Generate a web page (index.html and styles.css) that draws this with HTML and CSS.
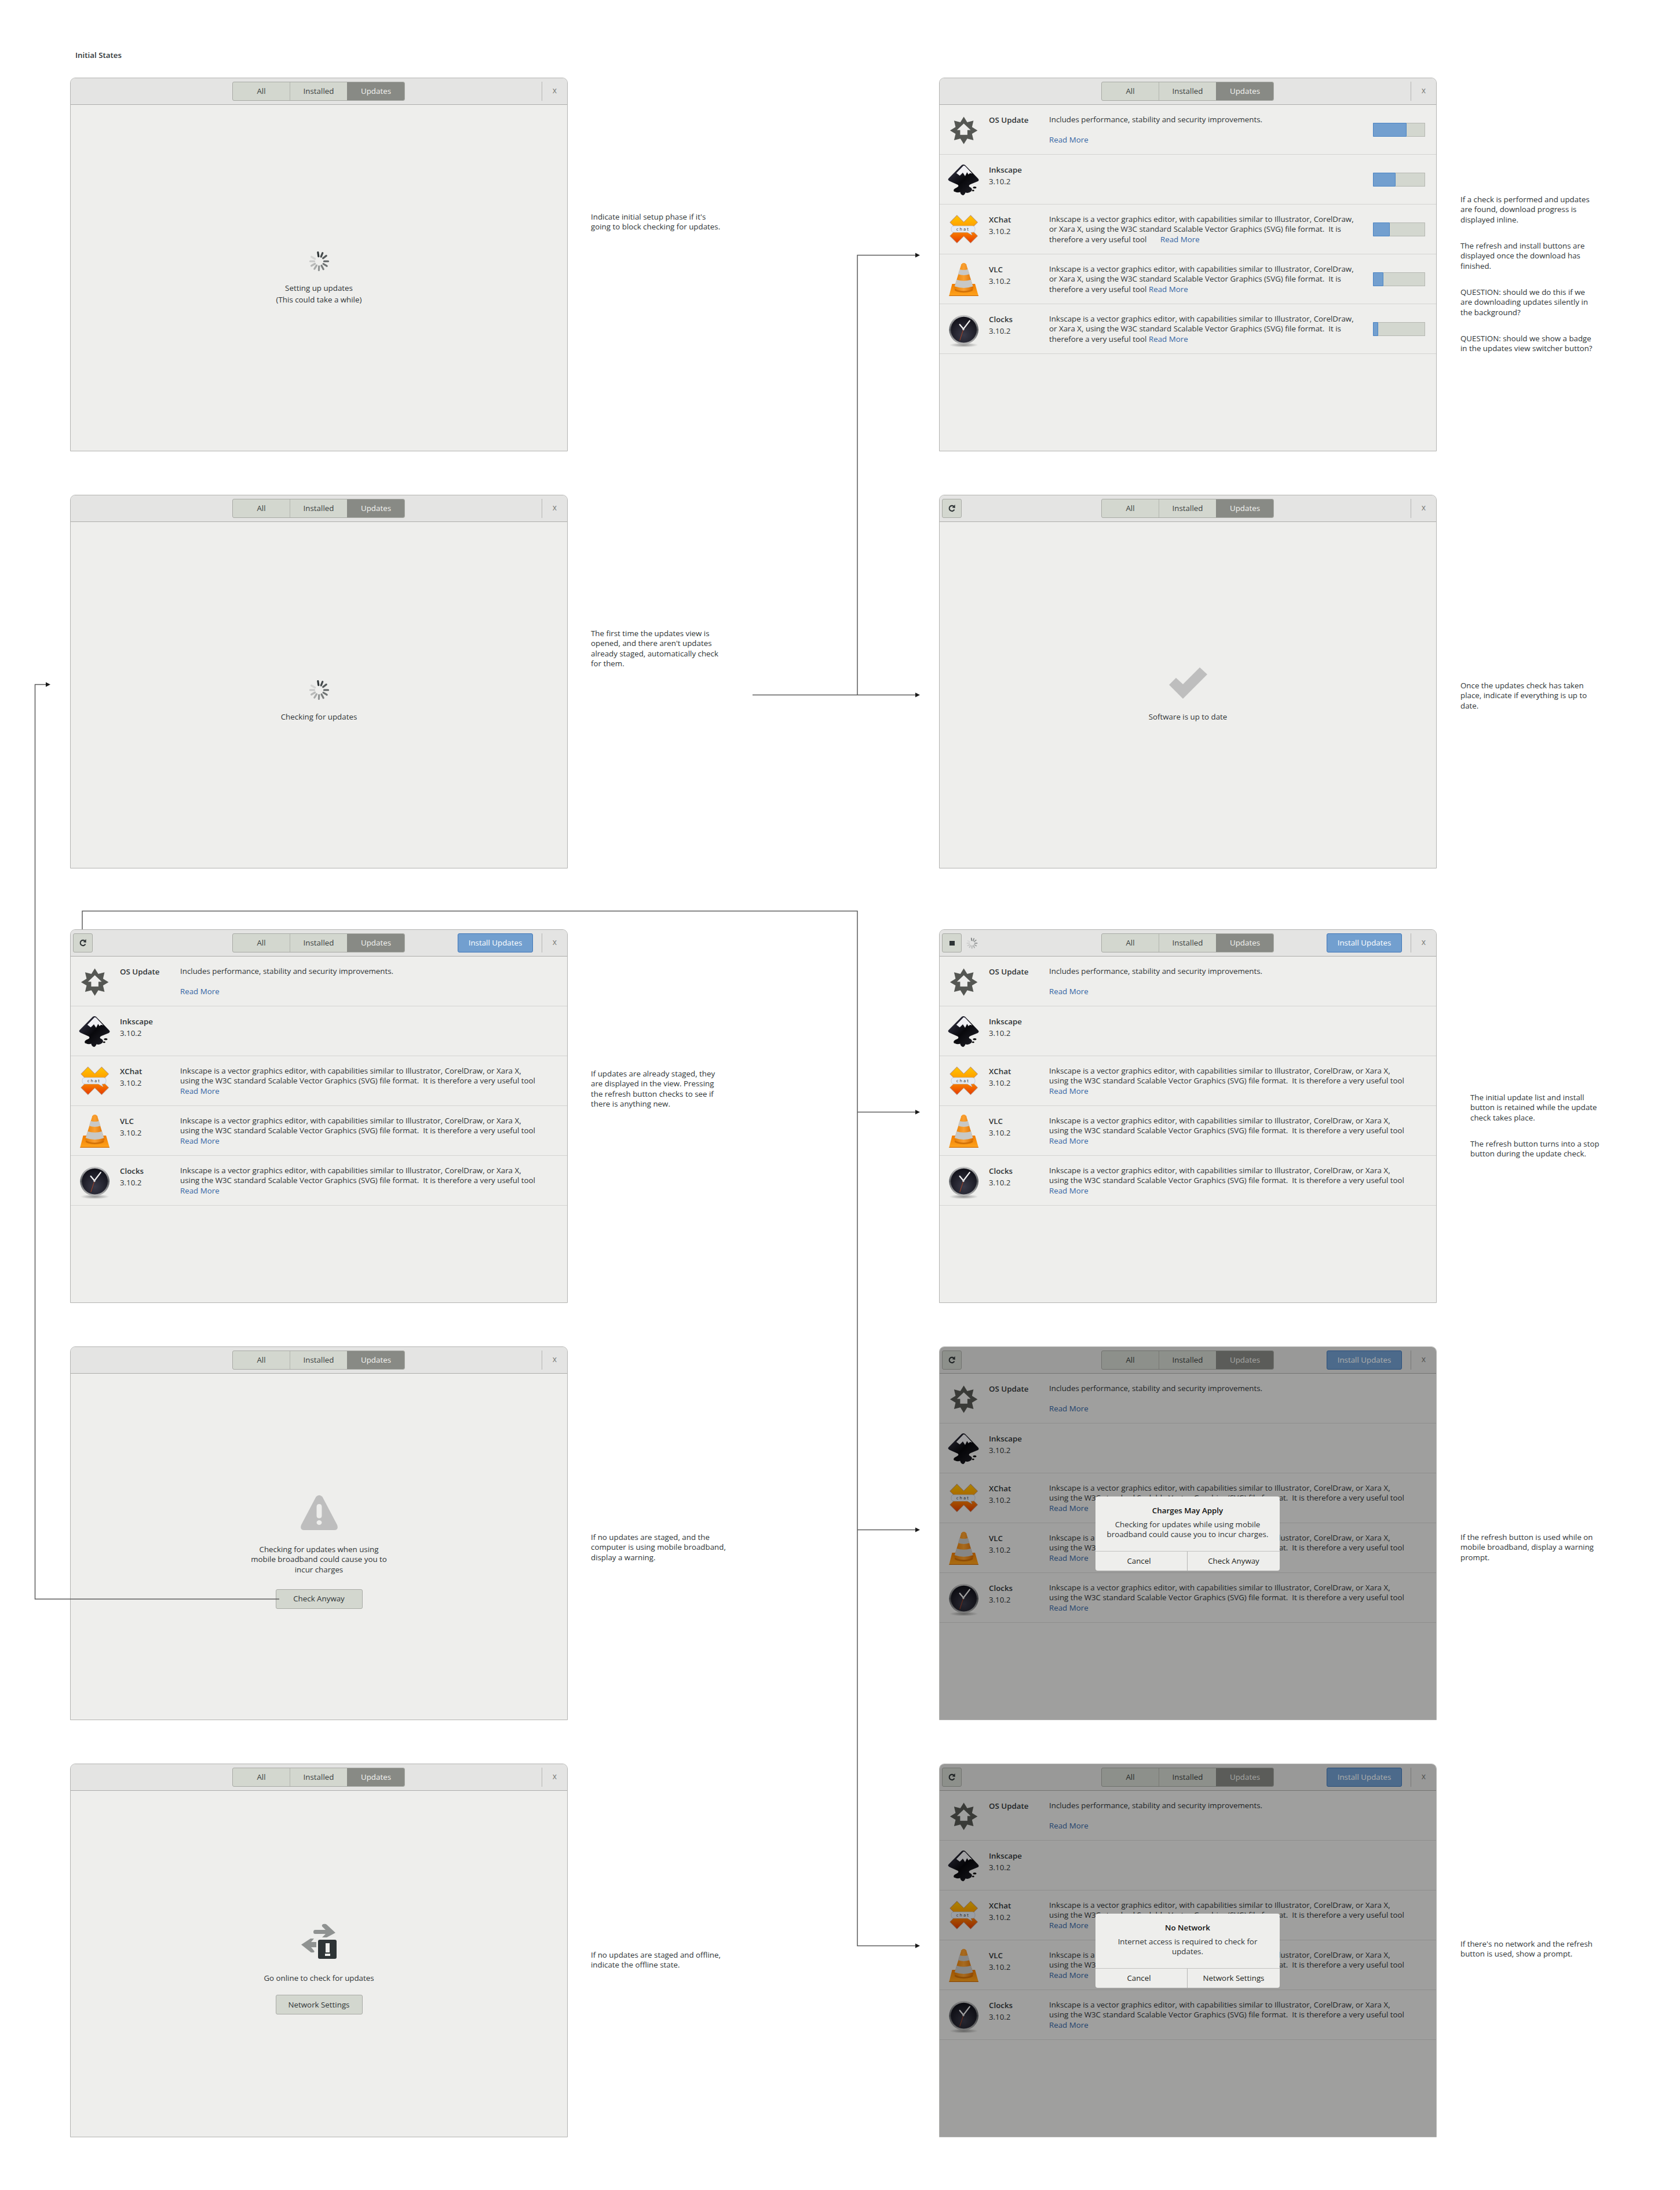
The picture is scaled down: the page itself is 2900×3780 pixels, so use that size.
FILE: index.html
```html
<!DOCTYPE html>
<html lang="en">
<head>
<meta charset="utf-8">
<title>Updates initial states</title>
<link rel="stylesheet" href="styles.css">
</head>
<body>
<svg class="sprite" xmlns="http://www.w3.org/2000/svg">
  <defs>
    <linearGradient id="g-x" gradientUnits="userSpaceOnUse" x1="0" y1="58" x2="0" y2="200"><stop offset="0" stop-color="#ffc400"/><stop offset=".45" stop-color="#ff9a00"/><stop offset="1" stop-color="#e63c00"/></linearGradient>
    <linearGradient id="g-cone" x1="0" y1="0" x2="1" y2="0"><stop offset="0" stop-color="#e87d00"/><stop offset=".5" stop-color="#f9a032"/><stop offset="1" stop-color="#d96c00"/></linearGradient>
    <linearGradient id="g-base" x1="0" y1="0" x2="0" y2="1"><stop offset="0" stop-color="#f07c00"/><stop offset="1" stop-color="#ffa51e"/></linearGradient>
    <linearGradient id="g-rim" x1="0" y1="0" x2="0" y2="1"><stop offset="0" stop-color="#c9c9c9"/><stop offset=".5" stop-color="#55585c"/><stop offset="1" stop-color="#b9b9b9"/></linearGradient>
    <radialGradient id="g-face" cx=".5" cy=".7" r=".7"><stop offset="0" stop-color="#3a3a48"/><stop offset="1" stop-color="#101018"/></radialGradient>
    <radialGradient id="g-shadow" cx=".5" cy=".5" r=".5"><stop offset="0" stop-color="#000" stop-opacity=".4"/><stop offset="1" stop-color="#000" stop-opacity="0"/></radialGradient>
    <linearGradient id="g-ink" x1="0" y1="0" x2="1" y2="1"><stop offset="0" stop-color="#3c3c50"/><stop offset=".5" stop-color="#08080c"/><stop offset="1" stop-color="#26262e"/></linearGradient>
  </defs>
  <symbol id="i-os" viewBox="0 0 180 258">
    <polygon fill="#555753" points="89,62 107,91 140,83 132,116 161,134 132,152 140,185 107,177 89,206 71,177 38,185 46,152 17,134 46,116 38,83 71,91"/>
    <polygon fill="#eeeeec" points="89,98 125,132 108,132 108,157 70,157 70,132 53,132"/>
  </symbol>
  <symbol id="i-ink" viewBox="0 0 180 258">
    <path fill="url(#g-ink)" d="M78 55 Q87 48 96 55 L164 125 Q172 134 162 140 L125 155 Q112 160 118 168 Q140 178 128 192 Q112 204 98 198 Q92 214 82 212 Q72 208 70 196 Q52 202 40 192 Q28 182 52 172 Q66 166 58 158 L14 138 Q2 132 10 124 Z"/>
    <path fill="#f0f0f4" d="M87 58 Q92 56 98 62 L134 100 Q120 92 114 104 L106 92 L96 112 L84 94 L68 110 L50 96 Z"/>
    <ellipse cx="146" cy="172" rx="9" ry="5" fill="#111"/><ellipse cx="138" cy="188" rx="6" ry="4" fill="#111"/><ellipse cx="44" cy="190" rx="8" ry="4" fill="#111"/>
  </symbol>
  <symbol id="i-xchat" viewBox="0 0 180 258">
    <path d="M34 74 L144 184 M144 74 L34 184" stroke="#8a3000" stroke-width="54" opacity=".5"/>
    <path d="M36 76 L142 182 M142 76 L36 182" stroke="url(#g-x)" stroke-width="50"/>
    <path fill="#e6ecf5" stroke="#b6bfcb" stroke-width="2" d="M38 112 H134 Q148 112 148 129 Q148 146 134 146 H126 L132 160 L108 146 H38 Q23 146 23 129 Q23 112 38 112 Z"/>
  </symbol>
  <symbol id="i-vlc" viewBox="0 0 180 258">
    <polygon fill="url(#g-base)" points="28,155 148,155 166,218 12,218"/>
    <rect x="12" y="215" width="154" height="3" fill="#c45f00"/>
    <ellipse cx="89" cy="186" rx="48" ry="14" fill="#b85a00" opacity=".6"/>
    <path fill="url(#g-cone)" d="M76 52 Q89 38 102 52 L140 178 Q89 206 38 178 Z"/>
    <path fill="#c8c8c6" d="M67 78 Q89 86 111 78 L119 104 Q89 114 59 104 Z"/>
    <path fill="#c8c8c6" d="M51 133 Q89 145 127 133 L137 168 Q89 184 41 168 Z"/>
  </symbol>
  <symbol id="i-clock" viewBox="0 0 180 258">
    <ellipse cx="89" cy="214" rx="76" ry="12" fill="url(#g-shadow)"/>
    <circle cx="89" cy="134" r="77" fill="url(#g-rim)"/>
    <circle cx="89" cy="134" r="68" fill="url(#g-face)"/>
    <path d="M87 130 L120 87" stroke="#f2f2f2" stroke-width="7" stroke-linecap="round"/>
    <path d="M87 130 L68 107" stroke="#f2f2f2" stroke-width="7" stroke-linecap="round"/>
    <path d="M87 132 L68 190" stroke="#c8481e" stroke-width="2.5"/>
    <circle cx="87" cy="132" r="5" fill="#ddd"/>
  </symbol>
  <symbol id="i-spinner" viewBox="-18 -18 36 36">
    <g stroke="#2e3436" stroke-width="3.2" stroke-linecap="round">
      <line x1="0" y1="-8.5" x2="0" y2="-15.5" opacity="1" transform="rotate(-8)"/>
      <line x1="0" y1="-8.5" x2="0" y2="-15.5" opacity=".88" transform="rotate(22)"/>
      <line x1="0" y1="-8.5" x2="0" y2="-15.5" opacity=".8" transform="rotate(52)"/>
      <line x1="0" y1="-8.5" x2="0" y2="-15.5" opacity=".74" transform="rotate(90)"/>
      <line x1="0" y1="-8.5" x2="0" y2="-15.5" opacity=".66" transform="rotate(122)"/>
      <line x1="0" y1="-8.5" x2="0" y2="-15.5" opacity=".6" transform="rotate(152)"/>
      <line x1="0" y1="-8.5" x2="0" y2="-15.5" opacity=".48" transform="rotate(182)"/>
      <line x1="0" y1="-8.5" x2="0" y2="-15.5" opacity=".36" transform="rotate(212)"/>
      <line x1="0" y1="-8.5" x2="0" y2="-15.5" opacity=".28" transform="rotate(240)"/>
      <line x1="0" y1="-8.5" x2="0" y2="-15.5" opacity=".2" transform="rotate(270)"/>
      <line x1="0" y1="-8.5" x2="0" y2="-15.5" opacity=".13" transform="rotate(300)"/>
    </g>
  </symbol>
  <symbol id="i-warn" viewBox="0 0 64 61">
    <path fill-rule="evenodd" fill="#bebebe" d="M26.5 3.5 Q32 -2 37.5 3.5 L63 52 Q66 61 58 61 H6 Q-2 61 1 52 Z M27.5 21 V36 Q27.5 40.5 32 40.5 Q36.500 40.5 36.500 36 V21 Q36.500 16 32 16 Q27.500 16 27.500 21 Z M32 44 A4.500 4 0 1 0 32 52 A4.500 4 0 1 0 32 44 Z"/>
  </symbol>
  <symbol id="i-offline" viewBox="0 0 62 61">
    <path fill="#8f9291" d="M38 1 Q42 0 44 2 L59 16 L44 24 H36 L42 18 H24 Q21 18 21 14.500 Q21 11 24 11 H42 L36 5 Q35 2 38 1 Z"/>
    <path fill="#8f9291" d="M21 26 H22 V26 L17 32 H26 V41 H17 L22 47 Q24 50 20 50 H17 L0 36.500 L16 26 Z"/>
    <rect x="29" y="28" width="32" height="33" rx="3" fill="#2e3436"/>
    <rect x="42" y="34" width="7" height="16" fill="#eeeeec"/><rect x="41" y="52" width="9" height="4" fill="#eeeeec"/>
  </symbol>
  <symbol id="i-refresh" viewBox="0 0 14 14">
    <path d="M11.200 9.200 A5 5 0 1 1 9.800 3" fill="none" stroke="#2e3436" stroke-width="2.200"/>
    <polygon fill="#2e3436" points="12.500,0 12.500,6.500 7,5.500"/>
  </symbol>
</svg>

<main class="canvas">
  <h1 class="sheet-title">Initial States</h1>

  <section class="state-row">
    <article class="window">
      <header class="bar">
        <div class="bar-left"></div>
        <nav class="switcher"><span class="seg">All</span><span class="seg">Installed</span><span class="seg seg-on">Updates</span></nav>
        <div class="bar-right"><span class="close">x</span></div>
      </header>
      <div class="empty pad-setup">
        <svg class="spinner"><use href="#i-spinner"/></svg>
        <p class="empty-text gap-spin">Setting up updates<br>(This could take a while)</p>
      </div>
    </article>
    <aside class="note note-a1"><p>Indicate initial setup phase if it's<br>going to block checking for updates.</p></aside>
    <article class="window">
      <header class="bar">
        <div class="bar-left"></div>
        <nav class="switcher"><span class="seg">All</span><span class="seg">Installed</span><span class="seg seg-on">Updates</span></nav>
        <div class="bar-right"><span class="close">x</span></div>
      </header>
      <div class="list">
        <div class="row"><svg class="app-icon"><use href="#i-os"/></svg><div class="name"><b>OS Update</b></div><div class="desc">Includes performance, stability and security improvements.<br><br><a class="more">Read More</a></div><div class="progress"><div class="fill" style="width:66%"></div></div></div>
        <div class="row"><svg class="app-icon"><use href="#i-ink"/></svg><div class="name"><b>Inkscape</b><br>3.10.2</div><div class="desc"></div><div class="progress"><div class="fill" style="width:44%"></div></div></div>
        <div class="row"><svg class="app-icon" viewBox="0 0 180 258"><use href="#i-xchat"/><text class="chat-label" x="85" y="138" text-anchor="middle">chat</text></svg><div class="name"><b>XChat</b><br>3.10.2</div><div class="desc">Inkscape is a vector graphics editor, with capabilities similar to Illustrator, CorelDraw,<br>or Xara X, using the W3C standard Scalable Vector Graphics (SVG) file format.&nbsp; It is<br>therefore a very useful tool <a class="more more-gap">Read More</a></div><div class="progress"><div class="fill" style="width:33%"></div></div></div>
        <div class="row"><svg class="app-icon"><use href="#i-vlc"/></svg><div class="name"><b>VLC</b><br>3.10.2</div><div class="desc">Inkscape is a vector graphics editor, with capabilities similar to Illustrator, CorelDraw,<br>or Xara X, using the W3C standard Scalable Vector Graphics (SVG) file format.&nbsp; It is<br>therefore a very useful tool <a class="more">Read More</a></div><div class="progress"><div class="fill" style="width:21%"></div></div></div>
        <div class="row"><svg class="app-icon"><use href="#i-clock"/></svg><div class="name"><b>Clocks</b><br>3.10.2</div><div class="desc">Inkscape is a vector graphics editor, with capabilities similar to Illustrator, CorelDraw,<br>or Xara X, using the W3C standard Scalable Vector Graphics (SVG) file format.&nbsp; It is<br>therefore a very useful tool <a class="more">Read More</a></div><div class="progress"><div class="fill" style="width:10%"></div></div></div>
      </div>
    </article>
    <aside class="note note-r1">
      <p>If a check is performed and updates<br>are found, download progress is<br>displayed inline.</p>
      <p>The refresh and install buttons are<br>displayed once the download has<br>finished.</p>
      <p>QUESTION: should we do this if we<br>are downloading updates silently in<br>the background?</p>
      <p>QUESTION: should we show a badge<br>in the updates view switcher button?</p>
    </aside>
  </section>

  <section class="state-row row-wide">
    <article class="window">
      <header class="bar">
        <div class="bar-left"></div>
        <nav class="switcher"><span class="seg">All</span><span class="seg">Installed</span><span class="seg seg-on">Updates</span></nav>
        <div class="bar-right"><span class="close">x</span></div>
      </header>
      <div class="empty pad-check">
        <svg class="spinner"><use href="#i-spinner"/></svg>
        <p class="empty-text gap-spin">Checking for updates</p>
      </div>
    </article>
    <aside class="note note-a2"><p>The first time the updates view is<br>opened, and there aren't updates<br>already staged, automatically check<br>for them.</p></aside>
    <article class="window">
      <header class="bar">
        <div class="bar-left"><button class="tool"><svg class="tool-icon"><use href="#i-refresh"/></svg></button></div>
        <nav class="switcher"><span class="seg">All</span><span class="seg">Installed</span><span class="seg seg-on">Updates</span></nav>
        <div class="bar-right"><span class="close">x</span></div>
      </header>
      <div class="empty pad-done">
        <svg class="check" viewBox="0 0 66 54"><polygon fill="#bebebe" points="0,30 12,18 24,29 53,0 66,12 24,54"/></svg>
        <p class="empty-text gap-done">Software is up to date</p>
      </div>
    </article>
    <aside class="note note-r2"><p>Once the updates check has taken<br>place, indicate if everything is up to<br>date.</p></aside>
  </section>

  <section class="state-row">
    <article class="window">
      <header class="bar">
        <div class="bar-left"><button class="tool"><svg class="tool-icon"><use href="#i-refresh"/></svg></button></div>
        <nav class="switcher"><span class="seg">All</span><span class="seg">Installed</span><span class="seg seg-on">Updates</span></nav>
        <div class="bar-right"><button class="install">Install Updates</button><span class="close">x</span></div>
      </header>
      <div class="list">
        <div class="row"><svg class="app-icon"><use href="#i-os"/></svg><div class="name"><b>OS Update</b></div><div class="desc">Includes performance, stability and security improvements.<br><br><a class="more">Read More</a></div></div>
        <div class="row"><svg class="app-icon"><use href="#i-ink"/></svg><div class="name"><b>Inkscape</b><br>3.10.2</div><div class="desc"></div></div>
        <div class="row"><svg class="app-icon" viewBox="0 0 180 258"><use href="#i-xchat"/><text class="chat-label" x="85" y="138" text-anchor="middle">chat</text></svg><div class="name"><b>XChat</b><br>3.10.2</div><div class="desc">Inkscape is a vector graphics editor, with capabilities similar to Illustrator, CorelDraw, or Xara X,<br>using the W3C standard Scalable Vector Graphics (SVG) file format.&nbsp; It is therefore a very useful tool<br><a class="more">Read More</a></div></div>
        <div class="row"><svg class="app-icon"><use href="#i-vlc"/></svg><div class="name"><b>VLC</b><br>3.10.2</div><div class="desc">Inkscape is a vector graphics editor, with capabilities similar to Illustrator, CorelDraw, or Xara X,<br>using the W3C standard Scalable Vector Graphics (SVG) file format.&nbsp; It is therefore a very useful tool<br><a class="more">Read More</a></div></div>
        <div class="row"><svg class="app-icon"><use href="#i-clock"/></svg><div class="name"><b>Clocks</b><br>3.10.2</div><div class="desc">Inkscape is a vector graphics editor, with capabilities similar to Illustrator, CorelDraw, or Xara X,<br>using the W3C standard Scalable Vector Graphics (SVG) file format.&nbsp; It is therefore a very useful tool<br><a class="more">Read More</a></div></div>
      </div>
    </article>
    <aside class="note note-a3"><p>If updates are already staged, they<br>are displayed in the view. Pressing<br>the refresh button checks to see if<br>there is anything new.</p></aside>
    <article class="window">
      <header class="bar">
        <div class="bar-left"><button class="tool"><span class="stop"></span></button><svg class="spinner-small"><use href="#i-spinner"/></svg></div>
        <nav class="switcher"><span class="seg">All</span><span class="seg">Installed</span><span class="seg seg-on">Updates</span></nav>
        <div class="bar-right"><button class="install">Install Updates</button><span class="close">x</span></div>
      </header>
      <div class="list">
        <div class="row"><svg class="app-icon"><use href="#i-os"/></svg><div class="name"><b>OS Update</b></div><div class="desc">Includes performance, stability and security improvements.<br><br><a class="more">Read More</a></div></div>
        <div class="row"><svg class="app-icon"><use href="#i-ink"/></svg><div class="name"><b>Inkscape</b><br>3.10.2</div><div class="desc"></div></div>
        <div class="row"><svg class="app-icon" viewBox="0 0 180 258"><use href="#i-xchat"/><text class="chat-label" x="85" y="138" text-anchor="middle">chat</text></svg><div class="name"><b>XChat</b><br>3.10.2</div><div class="desc">Inkscape is a vector graphics editor, with capabilities similar to Illustrator, CorelDraw, or Xara X,<br>using the W3C standard Scalable Vector Graphics (SVG) file format.&nbsp; It is therefore a very useful tool<br><a class="more">Read More</a></div></div>
        <div class="row"><svg class="app-icon"><use href="#i-vlc"/></svg><div class="name"><b>VLC</b><br>3.10.2</div><div class="desc">Inkscape is a vector graphics editor, with capabilities similar to Illustrator, CorelDraw, or Xara X,<br>using the W3C standard Scalable Vector Graphics (SVG) file format.&nbsp; It is therefore a very useful tool<br><a class="more">Read More</a></div></div>
        <div class="row"><svg class="app-icon"><use href="#i-clock"/></svg><div class="name"><b>Clocks</b><br>3.10.2</div><div class="desc">Inkscape is a vector graphics editor, with capabilities similar to Illustrator, CorelDraw, or Xara X,<br>using the W3C standard Scalable Vector Graphics (SVG) file format.&nbsp; It is therefore a very useful tool<br><a class="more">Read More</a></div></div>
      </div>
    </article>
    <aside class="note note-r3">
      <p>The initial update list and install<br>button is retained while the update<br>check takes place.</p>
      <p>The refresh button turns into a stop<br>button during the update check.</p>
    </aside>
  </section>

  <section class="state-row">
    <article class="window">
      <header class="bar">
        <div class="bar-left"></div>
        <nav class="switcher"><span class="seg">All</span><span class="seg">Installed</span><span class="seg seg-on">Updates</span></nav>
        <div class="bar-right"><span class="close">x</span></div>
      </header>
      <div class="empty pad-warn">
        <svg class="warn"><use href="#i-warn"/></svg>
        <p class="empty-text gap-icon tight">Checking for updates when using<br>mobile broadband could cause you to<br>incur charges</p>
        <button class="action gap-action">Check Anyway</button>
      </div>
    </article>
    <aside class="note note-a4"><p>If no updates are staged, and the<br>computer is using mobile broadband,<br>display a warning.</p></aside>
    <article class="window">
      <header class="bar">
        <div class="bar-left"><button class="tool"><svg class="tool-icon"><use href="#i-refresh"/></svg></button></div>
        <nav class="switcher"><span class="seg">All</span><span class="seg">Installed</span><span class="seg seg-on">Updates</span></nav>
        <div class="bar-right"><button class="install">Install Updates</button><span class="close">x</span></div>
      </header>
      <div class="list">
        <div class="row"><svg class="app-icon"><use href="#i-os"/></svg><div class="name"><b>OS Update</b></div><div class="desc">Includes performance, stability and security improvements.<br><br><a class="more">Read More</a></div></div>
        <div class="row"><svg class="app-icon"><use href="#i-ink"/></svg><div class="name"><b>Inkscape</b><br>3.10.2</div><div class="desc"></div></div>
        <div class="row"><svg class="app-icon" viewBox="0 0 180 258"><use href="#i-xchat"/><text class="chat-label" x="85" y="138" text-anchor="middle">chat</text></svg><div class="name"><b>XChat</b><br>3.10.2</div><div class="desc">Inkscape is a vector graphics editor, with capabilities similar to Illustrator, CorelDraw, or Xara X,<br>using the W3C standard Scalable Vector Graphics (SVG) file format.&nbsp; It is therefore a very useful tool<br><a class="more">Read More</a></div></div>
        <div class="row"><svg class="app-icon"><use href="#i-vlc"/></svg><div class="name"><b>VLC</b><br>3.10.2</div><div class="desc">Inkscape is a vector graphics editor, with capabilities similar to Illustrator, CorelDraw, or Xara X,<br>using the W3C standard Scalable Vector Graphics (SVG) file format.&nbsp; It is therefore a very useful tool<br><a class="more">Read More</a></div></div>
        <div class="row"><svg class="app-icon"><use href="#i-clock"/></svg><div class="name"><b>Clocks</b><br>3.10.2</div><div class="desc">Inkscape is a vector graphics editor, with capabilities similar to Illustrator, CorelDraw, or Xara X,<br>using the W3C standard Scalable Vector Graphics (SVG) file format.&nbsp; It is therefore a very useful tool<br><a class="more">Read More</a></div></div>
      </div>
      <div class="scrim"></div>
      <div class="dialog">
        <div class="dialog-body"><strong>Charges May Apply</strong><p>Checking for updates while using mobile<br>broadband could cause you to incur charges.</p></div>
        <div class="dialog-actions"><span class="act-cancel">Cancel</span><span>Check Anyway</span></div>
      </div>
    </article>
    <aside class="note note-r4"><p>If the refresh button is used while on<br>mobile broadband, display a warning<br>prompt.</p></aside>
  </section>

  <section class="state-row">
    <article class="window">
      <header class="bar">
        <div class="bar-left"></div>
        <nav class="switcher"><span class="seg">All</span><span class="seg">Installed</span><span class="seg seg-on">Updates</span></nav>
        <div class="bar-right"><span class="close">x</span></div>
      </header>
      <div class="empty pad-offline">
        <svg class="offline"><use href="#i-offline"/></svg>
        <p class="empty-text gap-icon tight">Go online to check for updates</p>
        <button class="action gap-action-sm">Network Settings</button>
      </div>
    </article>
    <aside class="note note-a5"><p>If no updates are staged and offline,<br>indicate the offline state.</p></aside>
    <article class="window">
      <header class="bar">
        <div class="bar-left"><button class="tool"><svg class="tool-icon"><use href="#i-refresh"/></svg></button></div>
        <nav class="switcher"><span class="seg">All</span><span class="seg">Installed</span><span class="seg seg-on">Updates</span></nav>
        <div class="bar-right"><button class="install">Install Updates</button><span class="close">x</span></div>
      </header>
      <div class="list">
        <div class="row"><svg class="app-icon"><use href="#i-os"/></svg><div class="name"><b>OS Update</b></div><div class="desc">Includes performance, stability and security improvements.<br><br><a class="more">Read More</a></div></div>
        <div class="row"><svg class="app-icon"><use href="#i-ink"/></svg><div class="name"><b>Inkscape</b><br>3.10.2</div><div class="desc"></div></div>
        <div class="row"><svg class="app-icon" viewBox="0 0 180 258"><use href="#i-xchat"/><text class="chat-label" x="85" y="138" text-anchor="middle">chat</text></svg><div class="name"><b>XChat</b><br>3.10.2</div><div class="desc">Inkscape is a vector graphics editor, with capabilities similar to Illustrator, CorelDraw, or Xara X,<br>using the W3C standard Scalable Vector Graphics (SVG) file format.&nbsp; It is therefore a very useful tool<br><a class="more">Read More</a></div></div>
        <div class="row"><svg class="app-icon"><use href="#i-vlc"/></svg><div class="name"><b>VLC</b><br>3.10.2</div><div class="desc">Inkscape is a vector graphics editor, with capabilities similar to Illustrator, CorelDraw, or Xara X,<br>using the W3C standard Scalable Vector Graphics (SVG) file format.&nbsp; It is therefore a very useful tool<br><a class="more">Read More</a></div></div>
        <div class="row"><svg class="app-icon"><use href="#i-clock"/></svg><div class="name"><b>Clocks</b><br>3.10.2</div><div class="desc">Inkscape is a vector graphics editor, with capabilities similar to Illustrator, CorelDraw, or Xara X,<br>using the W3C standard Scalable Vector Graphics (SVG) file format.&nbsp; It is therefore a very useful tool<br><a class="more">Read More</a></div></div>
      </div>
      <div class="scrim"></div>
      <div class="dialog">
        <div class="dialog-body"><strong>No Network</strong><p>Internet access is required to check for<br>updates.</p></div>
        <div class="dialog-actions"><span class="act-cancel">Cancel</span><span>Network Settings</span></div>
      </div>
    </article>
    <aside class="note note-r5"><p>If there's no network and the refresh<br>button is used, show a prompt.</p></aside>
  </section>

  <svg class="wires" viewBox="0 0 2900 3780" xmlns="http://www.w3.org/2000/svg">
    <g fill="none" stroke="#5c5c5c" stroke-width="1.5">
      <path d="M1299 1199.500 H1582"/>
      <path d="M1480 1199.500 V440.500 H1582"/>
      <path d="M142 1604 V1572.500 H1480 V3358.500 H1582"/>
      <path d="M1480 1919.500 H1582"/>
      <path d="M1480 2640.500 H1582"/>
      <path d="M482 2760 H60.500 V1181.500 H82"/>
    </g>
    <g fill="#1a1a1a">
      <polygon points="1588,440.500 1580,436.500 1580,444.500"/>
      <polygon points="1588,1199.500 1580,1195.500 1580,1203.500"/>
      <polygon points="1588,1919.500 1580,1915.500 1580,1923.500"/>
      <polygon points="1588,2640.500 1580,2636.500 1580,2644.500"/>
      <polygon points="1588,3358.500 1580,3354.500 1580,3362.500"/>
      <polygon points="87,1181.500 79,1177.500 79,1185.500"/>
    </g>
  </svg>
</main>
</body>
</html>
```
FILE: styles.css
```css
* { box-sizing: border-box; }
html, body { margin: 0; padding: 0; background: #fff; }
body {
  font-family: "Open Sans", "Noto Sans", sans-serif;
  font-size: 13.33px;
  line-height: 17.33px;
  color: #2e3436;
}
p { margin: 0; }
.sprite { display: block; width: 0; height: 0; }

.canvas {
  position: relative;
  width: 2900px;
  height: 3780px;
  padding: 0 0 0 121px;
  overflow: hidden;
}
.sheet-title {
  margin: 0;
  padding-top: 86px;
  height: 134px;
  font-size: 13.33px;
  line-height: 18px;
  font-weight: 600;
  padding-left: 9px;
}

.state-row {
  display: grid;
  grid-template-columns: 859px 641px 859px 420px;
  height: 645px;
  margin-bottom: 75px;
  white-space: nowrap;
}
.row-wide { margin-bottom: 105px; }

.note { padding-left: 40px; display: flex; flex-direction: column; gap: 28px; }
.note-a1 { padding-top: 232px; }
.note-a2 { padding-top: 231px; }
.note-a3 { padding-top: 241px; }
.note-a4 { padding-top: 321px; }
.note-a5 { padding-top: 322px; }
.note-r1 { padding-top: 202px; padding-left: 41px; }
.note-r2 { padding-top: 321px; padding-left: 41px; }
.note-r3 { padding-top: 282px; padding-left: 58px; }
.note-r4 { padding-top: 321px; padding-left: 41px; }
.note-r5 { padding-top: 303px; padding-left: 41px; }

.window {
  position: relative;
  height: 645px;
  background: #eeeeec;
  border: 1px solid #b3b3b1;
  border-radius: 9px 9px 0 0;
  overflow: hidden;
}
.bar {
  display: grid;
  grid-template-columns: 279px 298px 280px;
  height: 46px;
  padding-top: 6px;
  background: #e4e4e3;
  border-bottom: 1px solid #adadab;
}
.bar-left { display: flex; align-items: flex-start; padding-left: 4px; gap: 8px; }
.bar-right { display: flex; align-items: flex-start; justify-content: flex-end; }
.switcher {
  display: flex;
  height: 33px;
  border: 1px solid #a8aaa5;
  border-radius: 3px;
  overflow: hidden;
  background: #d3d7cf;
}
.seg {
  flex: 1;
  text-align: center;
  line-height: 31px;
  border-left: 1px solid #b3b5af;
  color: #3a3f40;
}
.seg:first-child { border-left: 0; }
.seg-on { background: #888a85; color: #f4f4f2; border-left-color: #888a85; }
.close {
  width: 44px;
  height: 33px;
  border-left: 1px solid #b5b5b3;
  text-align: center;
  line-height: 29px;
  font-size: 14px;
  color: #7b7d79;
}
.tool {
  display: flex;
  align-items: center;
  justify-content: center;
  width: 34px;
  height: 33px;
  padding: 0;
  background: #d3d7cf;
  border: 1px solid #a8aaa5;
  border-radius: 3px;
}
.tool-icon { width: 13px; height: 13px; }
.stop { width: 9px; height: 8px; background: #2e3436; }
.spinner-small { width: 20px; height: 20px; margin-top: 7px; opacity: .55; }
.install {
  width: 130px;
  height: 33px;
  margin-right: 15px;
  padding: 0;
  background: #729fcf;
  border: 1px solid #3f76b8;
  border-radius: 3px;
  color: #fff;
  font: inherit;
  font-weight: 500;
}

.list { display: flex; flex-direction: column; }
.row {
  display: grid;
  grid-template-columns: 60px 117px 559px 90px;
  height: 86px;
  padding-left: 12px;
  border-bottom: 1px solid #d4d4d2;
}
.app-icon { width: 60px; height: 85px; }
.name { margin-left: 13px; padding-top: 17px; line-height: 19.6px; }
.name b { font-weight: 600; }
.desc { padding-top: 17px; }
.more { color: #3465a4; }
.more-gap { margin-left: 20px; }
.progress {
  align-self: center;
  height: 24px;
  background: #d3d7cf;
  border: 1px solid #b5b7b1;
}
.fill {
  height: 24px;
  margin: -1px;
  background: #729fcf;
  border: 1px solid #4a84c4;
  border-radius: 1px;
}

.empty { display: flex; flex-direction: column; align-items: center; text-align: center; }
.pad-setup { padding-top: 252px; }
.pad-check { padding-top: 272px; }
.pad-done { padding-top: 251px; }
.pad-warn { padding-top: 209px; }
.pad-offline { padding-top: 229px; }
.spinner { width: 36px; height: 36px; }
.check { width: 66px; height: 54px; }
.warn { width: 64px; height: 61px; }
.offline { width: 62px; height: 61px; }
.empty-text { line-height: 19.6px; }
.tight { line-height: 17.33px; }
.gap-spin { margin-top: 19px; }
.gap-done { margin-top: 22px; }
.gap-icon { margin-top: 25px; }
.action {
  width: 150px;
  height: 34px;
  padding: 0;
  background: #d3d7cf;
  border: 1px solid #a8aaa5;
  border-radius: 3px;
  color: #2e3436;
  font: inherit;
}
.gap-action { margin-top: 25px; }
.gap-action-sm { margin-top: 20px; }

.scrim { position: absolute; inset: 0; background: rgba(0, 0, 0, .33); }
.dialog {
  position: absolute;
  left: 269px;
  top: 258px;
  width: 318px;
  height: 128px;
  background: #eeeeec;
  border-radius: 4px;
  display: flex;
  flex-direction: column;
  text-align: center;
}
.dialog-body { height: 94px; padding-top: 15px; }
.dialog-body strong { display: block; font-weight: 600; color: #111; line-height: 18px; margin-bottom: 7px; }
.dialog-actions {
  display: grid;
  grid-template-columns: 158px 160px;
  height: 34px;
  border-top: 1px solid #c2c2c0;
  color: #1d1f20;
  line-height: 33px;
}
.act-cancel { padding-right: 8px; }
.dialog-actions span + span { border-left: 1px solid #b5b5b3; }

.chat-label { font-family: "DejaVu Sans", sans-serif; font-size: 21px; letter-spacing: 6px; fill: #333; }

.wires {
  position: absolute;
  left: 0;
  top: 0;
  width: 2900px;
  height: 3780px;
  pointer-events: none;
}
```
